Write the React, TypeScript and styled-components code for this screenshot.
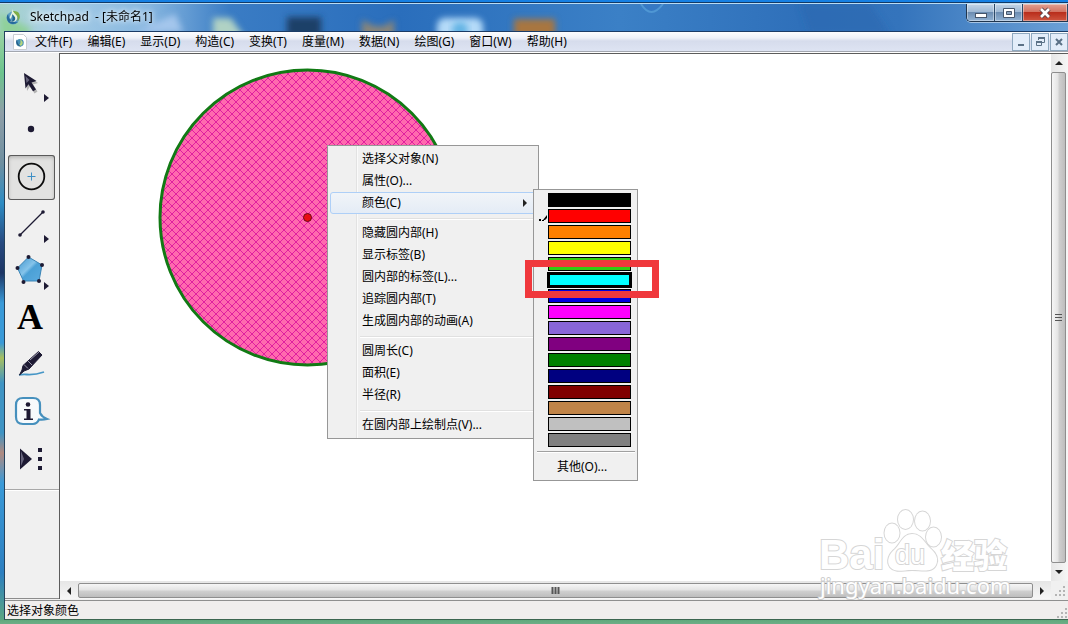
import React from "react";
import styled, { createGlobalStyle, css } from "styled-components";

const GlobalStyle = createGlobalStyle`
  * { box-sizing: border-box; }
  body {
    margin: 0;
    font: 12px/16px "Noto Sans", "Noto Sans CJK SC", sans-serif;
    color: #000;
  }
  button { font: inherit; color: inherit; margin: 0; padding: 0; border: 0; background: none; }
`;

const Desktop = styled.div`
  display: flex;
  flex-direction: column;
  min-height: 100vh;
  background: #1580e4;
  padding-top: 2px;
`;

const WindowFrame = styled.div`
  flex: 1;
  display: flex;
  flex-direction: column;
  border-top: 1px solid #123a66;
  padding: 0 0 4px 5px;
  background:
    linear-gradient(#5fa97c, #6cae86) bottom / 100% 4px no-repeat,
    linear-gradient(#a9d3cf 0, #8fcf9d 40px, #6cc48d 70px, #8f9fa8 110px, #6f8fa0 160px, #2d8cc4 200px, #274a80 240px, #1c3564 270px, #3a9ad8 300px, #3a9ad8 340px, #a8c060 355px, #3f94c4 380px, #3f94c4 430px, #b08a80 450px, #3a9ad8 480px, #2d7fc0 570px, #5fa97c 100%);
`;

const TitleBar = styled.header`
  position: relative;
  display: flex;
  align-items: flex-start;
  height: 28px;
  margin-left: -5px;
  padding-left: 5px;
  overflow: hidden;
  border-top: 1px solid #b9dcf4;
  background: linear-gradient(90deg, #a4d2c6 0, #a9cfe6 50px, #86b6e0 150px, #3a7cc4 230px, #2a6ebc 400px, #3b80c6 620px, #2f70ba 800px, #3474bc 900px, #6ba0d6 100%);
`;

const TitleGlass = styled.svg`
  position: absolute;
  inset: 0;
  width: 100%;
  height: 100%;
`;

const TitleText = styled.h1`
  position: relative;
  flex: 1;
  display: flex;
  align-items: center;
  gap: 9px;
  height: 26px;
  margin: 0;
  font-size: 12px;
  font-weight: 400;
  white-space: pre;
  text-shadow: 0 0 5px #fff, 0 0 8px rgba(255, 255, 255, 0.8);
`;

const CaptionButtons = styled.div`
  position: relative;
  display: flex;
  height: 18px;
  border: 1px solid #20364f;
  border-width: 0 0 1px 1px;
  border-radius: 0 0 0 5px;
  overflow: hidden;
  box-shadow: 0 1px 0 rgba(255, 255, 255, 0.5);
`;

const CaptionButton = styled.button<{ $close?: boolean }>`
  display: grid;
  place-items: center;
  width: ${(p) => (p.$close ? 45 : 28)}px;
  height: 17px;
  border-right: 1px solid #2c4968;
  box-shadow: inset 0 0 0 1px rgba(255, 255, 255, 0.4);
  background: ${(p) =>
    p.$close
      ? "linear-gradient(#e2a193 0, #d37463 45%, #b92e1c 50%, #cf5640 100%)"
      : "linear-gradient(#c3d4e6 0, #9fb9d4 45%, #6c8db2 50%, #92b3d4 100%)"};
`;

const Client = styled.div`
  flex: 1;
  display: flex;
  flex-direction: column;
  border-top: 1px solid #1b3c66;
  border-left: 1px solid #24425c;
  border-bottom: 1px solid #3c6650;
  margin-left: -1px;
  background: #f0f0f0;
`;

const MenuBar = styled.nav`
  display: flex;
  align-items: center;
  gap: 15px;
  height: 20px;
  padding-left: 8px;
  border-bottom: 1px solid #a3a7b0;
  background: linear-gradient(#fdfdfe 0, #eef1f8 6px, #d6dcec 9px, #dde3f2 18px);
  box-shadow: 0 1px 0 #fff;
`;

const MenuDocument = styled.span`
  display: flex;
  margin-right: -7px;
`;

const MdiButtons = styled.div`
  display: flex;
  gap: 1px;
  margin-left: auto;
`;

const MdiButton = styled.button`
  display: grid;
  place-items: center;
  width: 18px;
  height: 18px;
  border: 1px solid #8fa9c0;
  background: #e3edf9;
`;

const Workspace = styled.div`
  flex: 1;
  display: flex;
  margin-top: 1px;
`;

const Toolbox = styled.aside`
  width: 54px;
  border-bottom: 1px solid #8c8c8c;
  padding-top: 8px;
  margin-bottom: 1px;
`;

const ToolList = styled.div`
  display: flex;
  flex-direction: column;
  gap: 2px;
  padding: 0 0 7px 3px;
  border-bottom: 1px solid #a8a8a8;
  box-shadow: 0 1px 0 #fff;
`;

const ToolButton = styled.button<{ $active?: boolean }>`
  width: 47px;
  height: 45px;
  border-radius: 3px;
  ${(p) =>
    p.$active &&
    css`
      box-shadow: inset 0 0 0 1px #5a5a5a, inset 0 2px 4px rgba(0, 0, 0, 0.25);
      background: #e2e2e1;
    `}
  svg { display: block; }
`;

const Document = styled.main`
  flex: 1;
  display: grid;
  grid-template: 1fr 18px / 1fr 17px;
  border-left: 1px solid #5c5c5c;
  border-top: 1px solid #5c5c5c;
  margin-bottom: 1px;
`;

const Canvas = styled.section`
  position: relative;
  background: #fff;
`;

const Sketch = styled.svg`
  position: absolute;
  left: 0;
  top: 0;
`;

const ScrollTrack = styled.div<{ $vertical?: boolean }>`
  display: flex;
  flex-direction: ${(p) => (p.$vertical ? "column" : "row")};
  padding: ${(p) => (p.$vertical ? "0 2px 0 0" : "2px 0 1px")};
  background: ${(p) =>
    p.$vertical ? "linear-gradient(90deg, #e6e6e6, #f6f6f6)" : "linear-gradient(#e6e6e6, #f6f6f6)"};
`;

const ScrollArrow = styled.button`
  flex: 0 0 18px;
  display: grid;
  place-items: center;
`;

const ScrollThumb = styled.div<{ $vertical?: boolean }>`
  flex: 1;
  display: grid;
  place-items: center;
  border: 1px solid #8e8e8e;
  border-radius: 2px;
  background: linear-gradient(
    ${(p) => (p.$vertical ? "90deg" : "180deg")},
    #f6f6f6 0,
    #e4e4e4 45%,
    #cfcfcf 55%,
    #bdbdbd 100%
  );
`;

const SizeCorner = styled.div`
  display: flex;
  align-items: flex-end;
  justify-content: flex-end;
  padding: 2px;
`;

const StatusBar = styled.footer`
  display: flex;
  align-items: flex-end;
  justify-content: space-between;
  height: 19px;
  padding: 0 0 0 2px;
  border-top: 1px solid #8f8f8f;
  background: #f0eeed;
`;

const ContextMenu = styled.div`
  position: absolute;
  left: 267px;
  top: 91px;
  width: 212px;
  padding: 2px;
  border: 1px solid #979797;
  background: linear-gradient(90deg, transparent 28px, #e2e2e2 28px, #e2e2e2 29px, #fafafa 29px, #fafafa 30px, transparent 30px) #f0f0f0;
`;

const MenuItem = styled.button<{ $hot?: boolean }>`
  display: flex;
  align-items: center;
  justify-content: space-between;
  width: 100%;
  height: 22px;
  padding: 0 7px 0 31px;
  border: 1px solid ${(p) => (p.$hot ? "#aecff7" : "transparent")};
  border-radius: 3px;
  background: ${(p) => (p.$hot ? "linear-gradient(#f1f4f8, #e4ecf6)" : "none")};
  text-align: left;
`;

const MenuRule = styled.hr`
  height: 2px;
  margin: 4px 0 2px 30px;
  border: 0;
  border-top: 1px solid #e0e0e0;
  background: #fff;
`;

const ColorMenu = styled.div`
  position: absolute;
  left: 473px;
  top: 135px;
  display: flex;
  flex-direction: column;
  width: 105px;
  padding: 3px 3px 2px;
  border: 1px solid #979797;
  background: #f0f0f0;
`;

const Swatches = styled.div`
  display: flex;
  flex-direction: column;
  gap: 2px;
`;

const ColorRow = styled.div`
  display: grid;
  grid-template-columns: 11px 83px;
  align-items: center;
`;

const Swatch = styled.button<{ $color: string; $hot?: boolean }>`
  grid-column: 2;
  grid-row: 1;
  height: 14px;
  border: ${(p) => (p.$hot ? 2 : 1)}px solid #000;
  outline: ${(p) => (p.$hot ? "1px solid #000" : "none")};
  background: ${(p) => p.$color};
`;

const CheckMark = styled.svg`
  grid-column: 1;
  grid-row: 1;
  margin: 4px 0 0 2px;
`;

const ColorRule = styled.hr`
  width: 98px;
  height: 2px;
  margin: 4px 0 3px;
  border: 0;
  border-top: 1px solid #a0a0a0;
  background: #fff;
`;

const OtherItem = styled.button`
  height: 22px;
  padding-left: 20px;
  text-align: left;
`;

const Highlight = styled.div`
  position: absolute;
  left: 465px;
  top: 206px;
  width: 134px;
  height: 38px;
  border: 7px solid #f0383c;
  pointer-events: none;
`;

const Watermark = styled.svg`
  position: absolute;
  right: 36px;
  bottom: -19px;
  overflow: visible;
  z-index: 1;
  pointer-events: none;
`;

const Logo = ({ size = 16 }: { size?: number }) => (
  <svg width={size} height={size} viewBox="0 0 16 16">
    <circle cx="8" cy="9" r="6.4" fill="#5d9fc5" />
    <path d="M3 5C0 9 3 15 8 15c2 0 4-1 5-2-5 1-9-2-10-8z" fill="#25699b" />
    <path d="M7 0c1 4 7 5 5 10-1 3-5 4-7 2 5 0 5-4 2-6 0 2-1 3-2 4-1-4 3-5 2-10z" fill="#e8f4df" />
    <path d="M8 2c1 3 7 5 4 10 3-1 4-6 1-9-2-1-3-1-5-1z" fill="#7eae48" />
    <path d="M7 5c2 2 4 3 3 6-1 1-2 2-4 2 2-2 2-4 1-8z" fill="#236690" />
  </svg>
);

const Triangle = ({ d, w = 8, h = 8 }: { d: string; w?: number; h?: number }) => (
  <svg width={w} height={h}>
    <path d={d} fill="#222" />
  </svg>
);

const SizeGrip = () => (
  <svg width="12" height="12" fill="#b4b4b4">
    {[[9, 1], [5, 5], [9, 5], [1, 9], [5, 9], [9, 9]].map(([x, y]) => (
      <rect key={`${x}-${y}`} x={x} y={y} width="2" height="2" />
    ))}
  </svg>
);

const ink = "#1d1a33";
const flyout = <path d="M36 33v8l5-4z" fill={ink} />;

const tools: { name: string; active?: boolean; art: React.ReactNode }[] = [
  {
    name: "移动箭头工具",
    art: (
      <>
        <path d="M18 14l12 8-5 1.500 4.500 7-3 2-4.500-7-3 4.500z" fill="#b4b4b4" />
        <path d="M16 12l12.500 8-5 1.500 4.500 7-3 1.800-4.500-7-3 4.200z" fill={ink} />
        <path d="M17.500 15l1 7 3-3z" fill="#66647c" />
        {flyout}
      </>
    ),
  },
  { name: "点工具", art: <circle cx="23" cy="21" r="3.200" fill={ink} /> },
  {
    name: "圆工具",
    active: true,
    art: (
      <>
        <circle cx="23.500" cy="21.500" r="12.800" fill="none" stroke="#0c0c0c" strokeWidth="1.800" />
        <path d="M19.500 21.500h8M23.500 17.500v8" stroke="#3d8fc6" />
      </>
    ),
  },
  {
    name: "线段直尺工具",
    art: (
      <>
        <path d="M12 33L35 10" stroke={ink} strokeWidth="1.300" />
        <circle cx="12" cy="33" r="1.800" fill={ink} />
        <circle cx="35" cy="10" r="1.800" fill={ink} />
        {flyout}
      </>
    ),
  },
  {
    name: "多边形工具",
    art: (
      <>
        <path d="M20.500 8L34 16l-3 16H15.500L9.500 19z" fill="url(#poly)" stroke="#3a83b4" />
        {[[20.5, 8], [34, 16], [31, 32], [15.5, 33], [9.5, 19]].map(([x, y]) => (
          <circle key={x} cx={x} cy={y} r="2" fill={ink} />
        ))}
        {flyout}
      </>
    ),
  },
  {
    name: "文本工具",
    art: (
      <text x="22" y="33" textAnchor="middle" fontFamily="Liberation Serif, serif" fontWeight="700" fontSize="36" fill="#000">
        A
      </text>
    ),
  },
  {
    name: "标记工具",
    art: (
      <>
        <path d="M11 32c8-2 10 2 25-3" fill="none" stroke="#4696c6" strokeWidth="1.800" />
        <path d="M30.500 8.500l3.500 3.500-13 14-5 2-4.500 4 2.500-5 1-4.500z" fill={ink} stroke={ink} strokeLinejoin="round" />
        <path d="M16 21.500l4 4M20 18l4 4M22 17l9-8" stroke="#9a98ab" />
      </>
    ),
  },
  {
    name: "信息工具",
    art: (
      <>
        <path
          d="M15 8h10q7 0 7 7v8q2 4 7 6-4 1-8 .5-2 4.500-6 4.500H15q-7 0-7-7V15q0-7 7-7z"
          fill="#f7fafc"
          stroke="#4690bd"
          strokeWidth="2.200"
        />
        <circle cx="20" cy="14.500" r="2.300" fill={ink} />
        <path d="M16 19h6.500v9.500H25V30h-9v-1.500h2.500v-8H16z" fill={ink} />
      </>
    ),
  },
  {
    name: "自定义工具",
    art: (
      <>
        <path d="M12 11.500v21L24 22z" fill={ink} />
        <path d="M13 14v15l3-7z" fill="#66647c" />
        <path d="M30 11h4v4h-4zM30 20h4v4h-4zM30 29h4v4h-4z" fill={ink} />
      </>
    ),
  },
];

const menus = ["文件(F)", "编辑(E)", "显示(D)", "构造(C)", "变换(T)", "度量(M)", "数据(N)", "绘图(G)", "窗口(W)", "帮助(H)"];

const contextGroups = [
  ["选择父对象(N)", "属性(O)...", "颜色(C)"],
  ["隐藏圆内部(H)", "显示标签(B)", "圆内部的标签(L)...", "追踪圆内部(T)", "生成圆内部的动画(A)"],
  ["圆周长(C)", "面积(E)", "半径(R)"],
  ["在圆内部上绘制点(V)..."],
];

const colors = [
  "#000000", "#ff0000", "#ff8000", "#ffff00", "#33cc11", "#00ffff", "#0000dd", "#ff00ff",
  "#8866d8", "#800080", "#008000", "#000080", "#800000", "#c08448", "#c0c0c0", "#808080",
];

export default function App() {
  return (
    <Desktop>
      <GlobalStyle />
      <WindowFrame>
        <TitleBar>
          <TitleGlass aria-hidden="true">
            <filter id="soft" x="-20%" y="-40%" width="140%" height="180%">
              <feGaussianBlur stdDeviation="3" />
            </filter>
            <g filter="url(#soft)">
              <path d="M0 40V10l30 14v16z" fill="#8fd09a" />
              <path d="M135 28l40-18 8 18z" fill="#a4c6ec" />
              <path d="M213 14h18l14 20h-32z" fill="#b0d2c4" />
              <rect x="287" y="13" width="34" height="20" fill="#1d3f68" />
              <path d="M362 16l12 6h10l10-6v20h-32z" fill="#8a8578" />
              <rect x="437" y="14" width="46" height="24" rx="8" fill="#b4daf8" />
              <rect x="514" y="15" width="41" height="22" fill="#a8763f" />
              <path d="M800 0h70l20 30h-80z" fill="#2865ae" opacity=".5" />
            </g>
            <circle cx="460" cy="26" r="8" fill="#63b4e4" filter="url(#soft)" />
            <path d="M641 0q10 16 22 0" fill="#3679c4" stroke="#4f97d4" strokeWidth="2" />
          </TitleGlass>
          <TitleText>
            <Logo />
            {"Sketchpad  - [未命名1]"}
          </TitleText>
          <CaptionButtons>
            <CaptionButton aria-label="最小化">
              <svg width="14" height="12"><rect x="1.500" y="6.500" width="11" height="4" fill="#fff" stroke="#46566b" /></svg>
            </CaptionButton>
            <CaptionButton aria-label="最大化">
              <svg width="14" height="12">
                <path d="M1.500 1.500h11v9h-11z" fill="#fff" stroke="#46566b" />
                <path d="M4.500 4.500h5v3h-5z" fill="#8ba4c0" stroke="#46566b" />
              </svg>
            </CaptionButton>
            <CaptionButton aria-label="关闭" $close>
              <svg width="14" height="12">
                <path d="M3 2l8 8M11 2l-8 8" stroke="#59424a" strokeWidth="4.500" />
                <path d="M3 2l8 8M11 2l-8 8" stroke="#fff" strokeWidth="2.600" />
              </svg>
            </CaptionButton>
          </CaptionButtons>
        </TitleBar>

        <Client>
          <MenuBar>
            <MenuDocument>
              <svg width="14" height="16" viewBox="0 0 14 16">
                <path d="M.5.5h10l3 3v12H.5z" fill="#fff" stroke="#c8ccd2" />
                <svg x="2" y="3" width="10" height="10" viewBox="0 0 16 16">
                  <circle cx="8" cy="9" r="6" fill="#438fb7" />
                  <path d="M8 1c0 4 6 5 4 10-1 3-5 4-7 2 5-1 4-6 3-12z" fill="#b5d67c" />
                  <path d="M3 4c-3 4 0 11 7 11-4-2-6-5-7-11z" fill="#235b88" />
                </svg>
              </svg>
            </MenuDocument>
            {menus.map((m) => (
              <button key={m}>{m}</button>
            ))}
            <MdiButtons>
              <MdiButton aria-label="最小化文档">
                <svg width="12" height="12"><path d="M3 9h6" stroke="#5b7186" strokeWidth="2" /></svg>
              </MdiButton>
              <MdiButton aria-label="还原文档">
                <svg width="12" height="12" fill="none" stroke="#5b7186">
                  <path d="M4.500 4V1.500h6v5H8" />
                  <path d="M4 2h7M2 6h6" strokeWidth="2" />
                  <path d="M2.500 5.500h5v4h-5z" />
                </svg>
              </MdiButton>
              <MdiButton aria-label="关闭文档">
                <svg width="12" height="12"><path d="M3 3l6 6M9 3L3 9" stroke="#5b7186" strokeWidth="2" /></svg>
              </MdiButton>
            </MdiButtons>
          </MenuBar>

          <Workspace>
            <Toolbox>
              <ToolList>
                {tools.map((t) => (
                  <ToolButton key={t.name} aria-label={t.name} $active={t.active}>
                    <svg width="47" height="45">
                      <defs>
                        <linearGradient id="poly" x1="0" y1="0" x2="1" y2="1">
                          <stop offset="0" stopColor="#3c92cc" />
                          <stop offset=".45" stopColor="#86c4ea" />
                          <stop offset=".55" stopColor="#4ba0d6" />
                          <stop offset="1" stopColor="#5cace0" />
                        </linearGradient>
                      </defs>
                      {t.art}
                    </svg>
                  </ToolButton>
                ))}
              </ToolList>
            </Toolbox>

            <Document>
              <Canvas>
                <Sketch width="400" height="320">
                  <defs>
                    <pattern id="hatch" width="8" height="8" patternUnits="userSpaceOnUse">
                      <rect width="8" height="8" fill="#ff69ae" />
                      <path d="M-1-1l10 10M9-1L-1 9" stroke="#e0209f" />
                    </pattern>
                  </defs>
                  <circle cx="247.500" cy="163.500" r="147.500" fill="url(#hatch)" stroke="#117a14" strokeWidth="3" />
                  <circle cx="247.500" cy="163.500" r="4" fill="#e80c14" stroke="#6b0a18" />
                </Sketch>

                <ContextMenu role="menu">
                  {contextGroups.map((group, i) => (
                    <React.Fragment key={group[0]}>
                      {i > 0 && <MenuRule />}
                      {group.map((label) => (
                        <MenuItem key={label} role="menuitem" $hot={label === "颜色(C)"}>
                          {label}
                          {label === "颜色(C)" && <Triangle w={5} h={8} d="M0 0v8l4-4z" />}
                        </MenuItem>
                      ))}
                    </React.Fragment>
                  ))}
                </ContextMenu>

                <ColorMenu role="menu">
                  <Swatches>
                    {colors.map((c) => (
                      <ColorRow key={c}>
                        {c === "#ff0000" && (
                          <CheckMark width="9" height="7">
                            <path d="M0 4h2v2H0zM3 5h2v1H3zM4 5L8 0v3L6 5z" fill="#000" />
                          </CheckMark>
                        )}
                        <Swatch aria-label={c} $color={c} $hot={c === "#00ffff"} />
                      </ColorRow>
                    ))}
                  </Swatches>
                  <ColorRule />
                  <OtherItem role="menuitem">其他(O)...</OtherItem>
                </ColorMenu>

                <Highlight />

                <Watermark width="196" height="92">
                  <g fill="#fff" stroke="#d6d6d6" strokeWidth="2" paintOrder="stroke">
                    <text x="0" y="61" fontFamily="Liberation Sans, sans-serif" fontWeight="700" fontSize="42">Bai</text>
                    <ellipse cx="73" cy="25" rx="7.500" ry="9.500" />
                    <ellipse cx="86.500" cy="11.500" rx="7.500" ry="9.500" />
                    <ellipse cx="103.500" cy="13" rx="7.500" ry="9.500" />
                    <ellipse cx="114.500" cy="29" rx="7.500" ry="9.500" />
                    <path d="M93 26c9 0 12 8 18 14 6 5 9 11 6 17-4 8-14 5-24 5s-17 3-22-3c-4-6-1-13 5-18 6-6 8-15 17-15z" />
                    <text x="76" y="56" fontFamily="Liberation Sans, sans-serif" fontSize="27">du</text>
                    <text x="122" y="60" fontFamily="Noto Sans CJK SC, sans-serif" fontWeight="900" fontSize="33">经验</text>
                    <text x="1" y="86" fontFamily="Noto Sans, sans-serif" fontSize="22" stroke="#cccccc">jingyan.baidu.com</text>
                  </g>
                </Watermark>
              </Canvas>

              <ScrollTrack $vertical>
                <ScrollArrow aria-label="向上滚动"><Triangle d="M0 6l4-4 4 4z" /></ScrollArrow>
                <ScrollThumb $vertical>
                  <svg width="7" height="9"><path d="M0 1.500h7M0 4.500h7M0 7.500h7" stroke="#555" /></svg>
                </ScrollThumb>
                <ScrollArrow aria-label="向下滚动"><Triangle d="M0 2h8L4 6z" /></ScrollArrow>
              </ScrollTrack>
              <ScrollTrack>
                <ScrollArrow aria-label="向左滚动"><Triangle d="M6 0v8L2 4z" /></ScrollArrow>
                <ScrollThumb>
                  <svg width="9" height="7"><path d="M1.500 0v7M4.500 0v7M7.500 0v7" stroke="#555" strokeWidth="2" /></svg>
                </ScrollThumb>
                <ScrollArrow aria-label="向右滚动"><Triangle d="M2 0v8l4-4z" /></ScrollArrow>
              </ScrollTrack>
              <SizeCorner><SizeGrip /></SizeCorner>
            </Document>
          </Workspace>

          <StatusBar>
            选择对象颜色
            <SizeGrip />
          </StatusBar>
        </Client>
      </WindowFrame>
    </Desktop>
  );
}
